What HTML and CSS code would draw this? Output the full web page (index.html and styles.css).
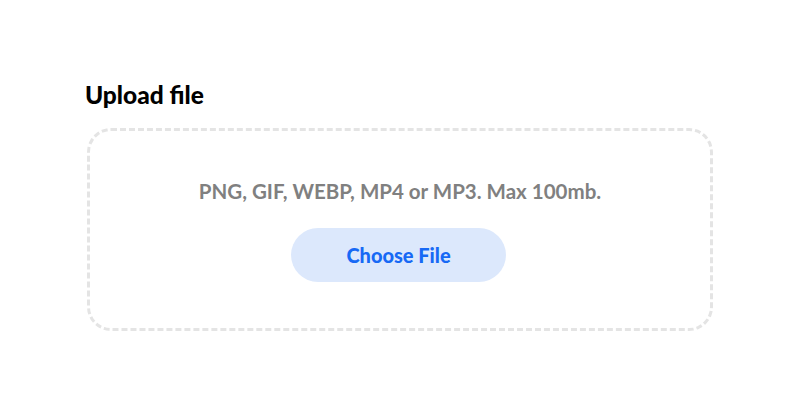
FILE: index.html
```html
<!DOCTYPE html>
<html>
<head>
<meta charset="utf-8">
<link rel="stylesheet" href="styles.css">
</head>
<body>
<main class="page">
  <section class="upload">
    <h2 class="upload-title">Upload file</h2>
    <div class="dropzone">
      <p class="dropzone-hint">PNG, GIF, WEBP, MP4 or MP3. Max 100mb.</p>
      <button class="choose-btn" type="button">Choose File</button>
    </div>
  </section>
</main>
</body>
</html>
```
FILE: styles.css
```css
* { box-sizing: border-box; }
html, body {
  margin: 0;
  padding: 0;
  background: #ffffff;
  font-family: Lato, "Open Sans", Arial, sans-serif;
}
.page {
  display: flex;
  justify-content: center;
  padding-top: 81px;
}
.upload {
  width: 626px;
}
.upload-title {
  margin: 0 0 19px -2px;
  font-size: 24.5px;
  line-height: 28px;
  font-weight: 900;
  color: #000;
}
.dropzone {
  border: 3px dashed #e4e4e4;
  border-radius: 24px;
  padding: 48px 20px 46px;
  display: flex;
  flex-direction: column;
  align-items: center;
}
.dropzone-hint {
  margin: 0 0 25px 0;
  font-size: 20.5px;
  line-height: 24px;
  font-weight: 700;
  color: #808080;
}
.choose-btn {
  width: 215px;
  height: 54px;
  margin-right: 3px;
  border: none;
  border-radius: 27px;
  background: #dce8fc;
  color: #1769f5;
  font-family: inherit;
  font-size: 20px;
  font-weight: 900;
  cursor: pointer;
}
```
